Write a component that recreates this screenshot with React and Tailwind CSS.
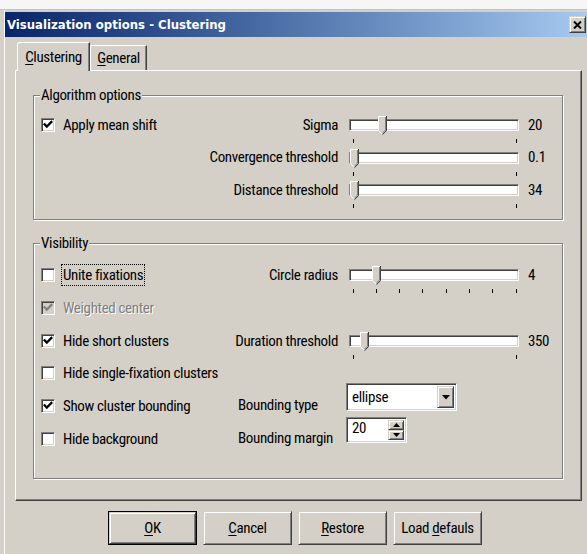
import React from "react";

// Classic sunken check box with an optional tick
function Check({ checked, disabled }) {
  return (
    <span
      className={`relative inline-block w-[14px] h-[14px] shrink-0 border border-t-[#808080] border-l-[#808080] border-b-white border-r-white shadow-[inset_1px_1px_0_#404040,inset_-1px_-1px_0_#d4d0c8] ${
        disabled ? "bg-[#d4d0c8]" : "bg-white"
      }`}
    >
      {checked && (
        <svg className="absolute inset-0" width="12" height="12" viewBox="0 0 12 12">
          <path
            d="M2.6 5.2 L4.8 7.6 L9.4 2.9"
            fill="none"
            stroke={disabled ? "#808080" : "#000"}
            strokeWidth="2.2"
            strokeLinecap="square"
          />
        </svg>
      )}
    </span>
  );
}

// Pointed trackbar thumb
function Thumb() {
  return (
    <svg width="9" height="19" viewBox="0 0 9 19">
      <polygon points="0,0 9,0 9,14.5 4.5,19 0,14.5" fill="#d4d0c8" />
      <path d="M0.5 14.5 V0.5 H8" fill="none" stroke="#fff" />
      <path d="M0.5 14.5 L4.5 18.5" fill="none" stroke="#fff" />
      <path d="M8.5 0 V14.5 L4.5 18.7" fill="none" stroke="#404040" />
      <path d="M7.5 1 V14 L4.5 17.2" fill="none" stroke="#808080" />
    </svg>
  );
}

function Slider({ thumb, ticks }) {
  return (
    <div className="relative w-[170px] h-[12px] shrink-0">
      <div className="h-full bg-white border border-t-[#808080] border-l-[#808080] border-b-white border-r-white shadow-[inset_1px_1px_0_#404040,inset_-1px_-1px_0_#d4d0c8]" />
      <div className="absolute top-[-3px] leading-none" style={{ left: thumb }}>
        <Thumb />
      </div>
      {ticks.map((t) => (
        <span key={t} className="absolute top-[20px] w-px h-[4px] bg-black" style={{ left: t }} />
      ))}
    </div>
  );
}

function Label({ children, focus, disabled }) {
  return (
    <span
      className={`ml-[6px] px-px leading-[20px] border whitespace-nowrap ${
        focus ? "border-dotted border-black" : "border-transparent"
      } ${disabled ? "text-[#808080] [text-shadow:1px_1px_0_#fff]" : ""}`}
    >
      {children}
    </span>
  );
}

function Row({ h, check, right }) {
  return (
    <div className={`flex items-center pl-[7px] ${h}`}>
      <div className="w-[160px] flex items-center shrink-0">{check}</div>
      {right}
    </div>
  );
}

function SliderPart({ label, thumb, ticks, value }) {
  return (
    <>
      <div className="w-[137px] text-right whitespace-nowrap shrink-0">{label}</div>
      <div className="ml-[11px]">
        <Slider thumb={thumb} ticks={ticks} />
      </div>
      <div className="ml-[9px]">{value}</div>
    </>
  );
}

function Group({ title, className, children }) {
  return (
    <div
      className={`relative w-[530px] border border-[#808080] shadow-[inset_1px_1px_0_#fff,1px_1px_0_#fff] ${className}`}
    >
      <span className="absolute left-[6px] top-[-11px] px-px bg-[#d4d0c8] leading-[20px]">{title}</span>
      {children}
    </div>
  );
}

function Raised({ className, children }) {
  return (
    <div
      className={`bg-[#d4d0c8] border border-t-[#d4d0c8] border-l-[#d4d0c8] border-b-[#404040] border-r-[#404040] shadow-[inset_1px_1px_0_#fff,inset_-1px_-1px_0_#808080] ${className}`}
    >
      {children}
    </div>
  );
}

function Combo() {
  return (
    <div className="self-start -mt-[6px] w-[111px] h-[28px] flex bg-white border border-t-[#808080] border-l-[#808080] border-b-white border-r-white shadow-[inset_1px_1px_0_#404040,inset_-1px_-1px_0_#d4d0c8] p-[2px]">
      <div className="flex-1 pl-[3px] leading-[22px]">ellipse</div>
      <Raised className="w-[17px] h-full flex items-center justify-center">
        <svg width="8" height="5" viewBox="0 0 8 5">
          <polygon points="0,0 8,0 4,4.5" fill="#000" />
        </svg>
      </Raised>
    </div>
  );
}

function Spin() {
  return (
    <div className="self-start -mt-[5px] w-[61px] h-[26px] flex bg-white border border-t-[#808080] border-l-[#808080] border-b-white border-r-white shadow-[inset_1px_1px_0_#404040,inset_-1px_-1px_0_#d4d0c8] p-[2px]">
      <div className="flex-1 pl-[3px] leading-[17px]">20</div>
      <div className="w-[16px] h-full flex flex-col">
        <Raised className="flex-1 flex items-center justify-center">
          <svg width="7" height="4" viewBox="0 0 7 4">
            <polygon points="0,4 7,4 3.5,0" fill="#000" />
          </svg>
        </Raised>
        <Raised className="flex-1 flex items-center justify-center">
          <svg width="7" height="4" viewBox="0 0 7 4">
            <polygon points="0,0 7,0 3.5,4" fill="#000" />
          </svg>
        </Raised>
      </div>
    </div>
  );
}

function Button({ children, isDefault }) {
  return (
    <div className={`w-[89px] h-[34px] ${isDefault ? "border border-black" : ""}`}>
      <Raised className="h-full flex items-center justify-center">{children}</Raised>
    </div>
  );
}

const U = ({ children }) => <span className="underline underline-offset-2">{children}</span>;

export default function App() {
  const two = [4, 167];
  const eight = [4, 27, 50, 73, 97, 120, 143, 167];
  return (
    <div className="w-[587px] h-[554px] overflow-hidden bg-[#d4d0c8] text-black text-[15px] tracking-[-0.35px] font-['Roboto','Liberation_Sans',sans-serif] [font-stretch:75%]">
      <div className="h-[10px] bg-[#f6f6f6] border-b border-[#c4c4c4]" />
      <div className="flex h-[544px]">
        <div className="w-[4px] shrink-0" />
        <div className="flex-1 border-l border-white pt-[2px] flex flex-col">
          {/* caption */}
          <div className="h-[25px] flex items-center justify-between bg-linear-to-r from-[#0a246a] to-[#a6caf0] pl-[2px] pr-px">
            <span className="text-white font-bold text-[13px] tracking-normal font-['DejaVu_Sans_Condensed','DejaVu_Sans',sans-serif]">
              Visualization options - Clustering
            </span>
            <Raised className="w-[17px] h-[17px] flex items-center justify-center">
              <svg width="9" height="8" viewBox="0 0 9 8">
                <path d="M1 0.5 L8 7.5 M8 0.5 L1 7.5" stroke="#000" strokeWidth="2" />
              </svg>
            </Raised>
          </div>

          <div className="pl-[10px] pt-[5px]">
            {/* tabs */}
            <div className="flex items-end h-[28px] pl-[2px]">
              <div className="relative z-10 -mb-px w-[73px] h-[29px] bg-[#d4d0c8] border-t border-l border-white rounded-tl-[3px] border-r border-r-[#404040] shadow-[inset_-1px_0_0_#808080] flex justify-center pt-[4px] leading-[20px]">
                <span>
                  <U>C</U>lustering
                </span>
              </div>
              <div className="w-[57px] h-[25px] border-t border-l border-white rounded-tl-[2px] border-r border-r-[#404040] shadow-[inset_-1px_0_0_#808080] flex justify-center pt-[2px] leading-[20px]">
                <span>
                  <U>G</U>eneral
                </span>
              </div>
            </div>

            {/* page */}
            <div className="w-[567px] h-[431px] border-t border-l border-white border-r border-b border-r-[#404040] border-b-[#404040] shadow-[inset_-1px_-1px_0_#808080] pl-[17px] pt-[24px]">
              <Group title="Algorithm options" className="h-[125px] pt-[13px]">
                <Row
                  h="h-[32px]"
                  check={
                    <>
                      <Check checked />
                      <Label>Apply mean shift</Label>
                    </>
                  }
                  right={<SliderPart label="Sigma" thumb={29} ticks={two} value="20" />}
                />
                <Row
                  h="h-[33px]"
                  right={<SliderPart label="Convergence threshold" thumb={1} ticks={two} value="0.1" />}
                />
                <Row
                  h="h-[32px]"
                  right={<SliderPart label="Distance threshold" thumb={1} ticks={two} value="34" />}
                />
              </Group>

              <Group title="Visibility" className="mt-[23px] h-[236px] pt-[15px]">
                <Row
                  h="h-[32px]"
                  check={
                    <>
                      <Check />
                      <Label focus>Unite fixations</Label>
                    </>
                  }
                  right={<SliderPart label="Circle radius" thumb={23} ticks={eight} value="4" />}
                />
                <Row
                  h="h-[34px]"
                  check={
                    <>
                      <Check checked disabled />
                      <Label disabled>Weighted center</Label>
                    </>
                  }
                />
                <Row
                  h="h-[32px]"
                  check={
                    <>
                      <Check checked />
                      <Label>Hide short clusters</Label>
                    </>
                  }
                  right={<SliderPart label="Duration threshold" thumb={11} ticks={two} value="350" />}
                />
                <Row
                  h="h-[32px]"
                  check={
                    <>
                      <Check />
                      <Label>Hide single-fixation clusters</Label>
                    </>
                  }
                />
                <Row
                  h="h-[33px]"
                  check={
                    <>
                      <Check checked />
                      <Label>Show cluster bounding</Label>
                    </>
                  }
                  right={
                    <>
                      <div className="w-[145px] pl-[37px] shrink-0 whitespace-nowrap">Bounding type</div>
                      <Combo />
                    </>
                  }
                />
                <Row
                  h="h-[33px]"
                  check={
                    <>
                      <Check />
                      <Label>Hide background</Label>
                    </>
                  }
                  right={
                    <>
                      <div className="w-[145px] pl-[37px] shrink-0 whitespace-nowrap">Bounding margin</div>
                      <Spin />
                    </>
                  }
                />
              </Group>
            </div>

            {/* dialog buttons */}
            <div className="flex gap-[6px] ml-[93px] mt-[10px]">
              <Button isDefault>
                <span>
                  <U>O</U>K
                </span>
              </Button>
              <Button>
                <span>
                  <U>C</U>ancel
                </span>
              </Button>
              <Button>
                <span>
                  <U>R</U>estore
                </span>
              </Button>
              <Button>
                <span>
                  Load <U>d</U>efauls
                </span>
              </Button>
            </div>
          </div>
        </div>
      </div>
    </div>
  );
}
